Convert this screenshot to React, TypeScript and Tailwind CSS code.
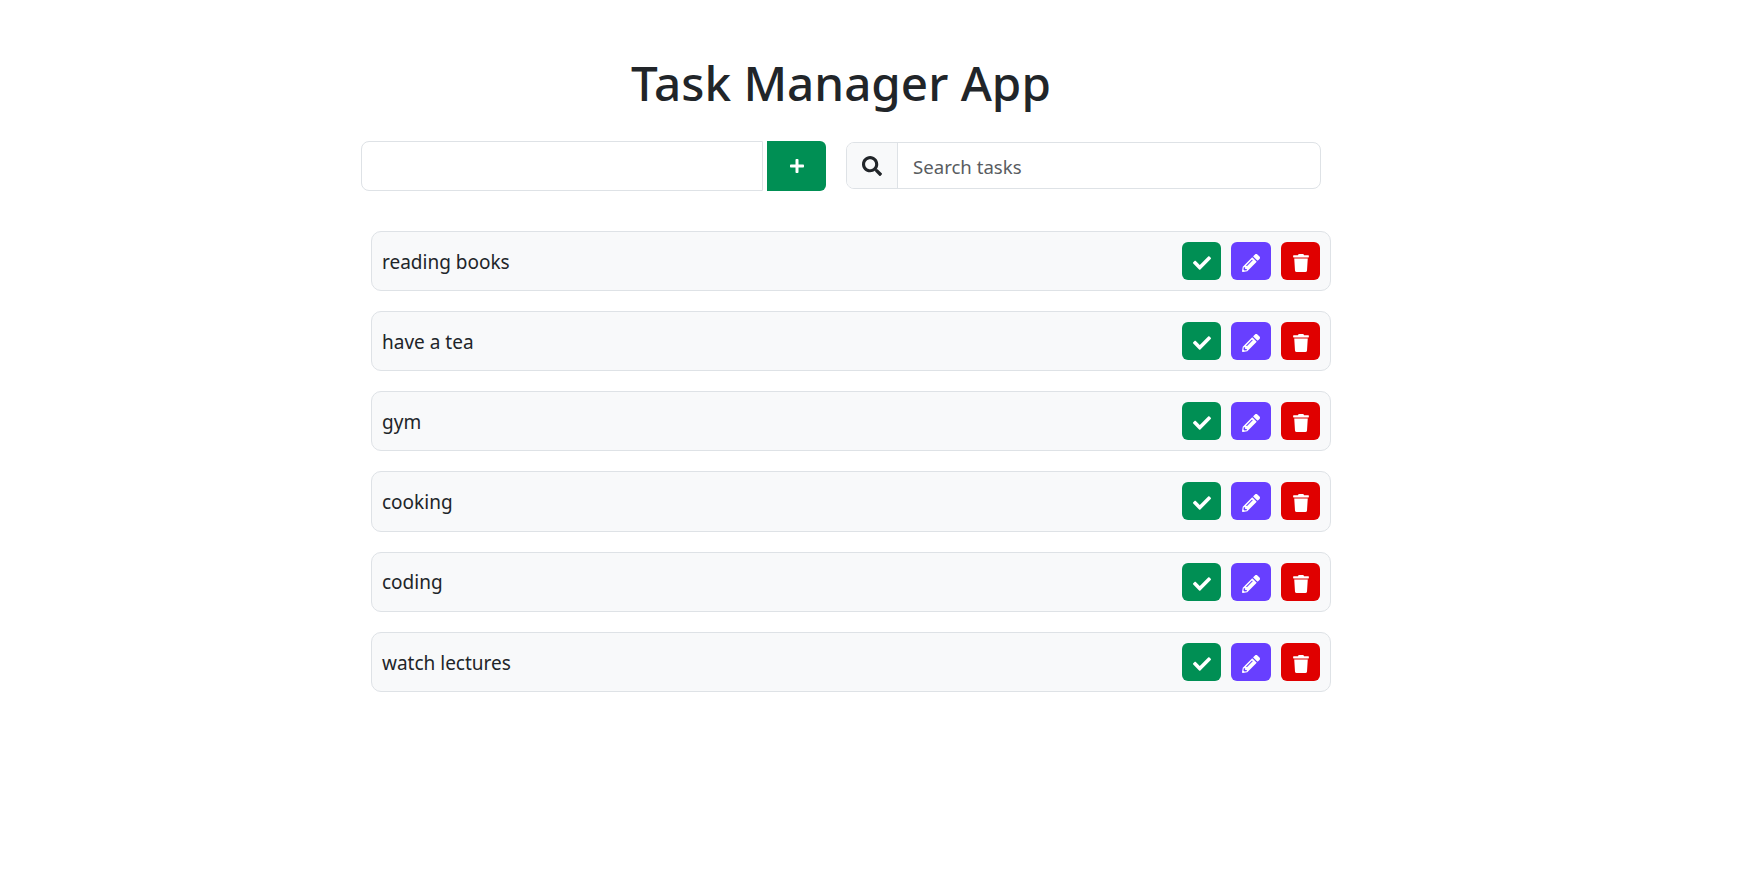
import { FaCheck, FaPencilAlt, FaPlus, FaSearch, FaTrash } from "react-icons/fa";

const tasks = ["reading books", "have a tea", "gym", "cooking", "coding", "watch lectures"];

function TaskRow({ name }: { name: string }) {
  return (
    <li className="h-[60.15px] mb-[20px] flex items-center justify-between pl-[10px] pr-[10px] bg-[#f8f9fa] border border-[#dee2e6] rounded-[10px]">
      <span className="text-[19px] mt-[2px] text-[#212529]">{name}</span>
      <div className="flex gap-[10px]">
        <button className="w-[39px] h-[38px] flex items-center justify-center rounded-[6px] bg-[#008f54] text-white">
          <FaCheck className="w-[18px] h-[18px] mt-[4px]" />
        </button>
        <button className="w-[40px] h-[38px] flex items-center justify-center rounded-[6px] bg-[#683fff] text-white">
          <FaPencilAlt className="w-[18px] h-[18px] mt-[4px]" />
        </button>
        <button className="w-[39px] h-[38px] flex items-center justify-center rounded-[6px] bg-[#e00000] text-white">
          <FaTrash className="w-[16px] h-[18px] mt-[4px]" />
        </button>
      </div>
    </li>
  );
}

export default function App() {
  return (
    <div className="min-h-[872px] bg-white font-['Noto_Sans','Open_Sans',sans-serif] text-[#212529]">
      <div className="w-[960px] ml-[361px] pt-[47px]">
        {/* TITLE */}
        <h1 className="text-center text-[47.6px] leading-[72px] font-medium text-[#212529]">Task Manager App</h1>

        {/* ADD + SEARCH */}
        <div className="flex items-start mt-[22px]">
          <input className="w-[402px] h-[50px] bg-white border border-[#dee2e6] rounded-l-[8px] rounded-r-none outline-none" />
          <button className="w-[59px] h-[50px] ml-[4px] flex items-center justify-center bg-[#008f54] text-white rounded-r-[6px]">
            <FaPlus className="w-[16px] h-[16px]" />
          </button>
          <div className="w-[475px] h-[47px] ml-[20px] mt-[1px] flex border border-[#dee2e6] rounded-[8px] overflow-hidden">
            <div className="w-[51px] flex items-center justify-center bg-[#f8f9fa] border-r border-[#dee2e6]">
              <FaSearch className="w-[20px] h-[20px] text-[#212529]" />
            </div>
            <input
              placeholder="Search tasks"
              className="flex-1 px-[15px] pt-[2px] text-[18.6px] outline-none placeholder:text-[#595c5f]"
            />
          </div>
        </div>

        {/* TASK LIST */}
        <ul className="w-[960px] ml-[10px] mt-[40px]">
          {tasks.map((t) => (
            <TaskRow key={t} name={t} />
          ))}
        </ul>
      </div>
    </div>
  );
}
